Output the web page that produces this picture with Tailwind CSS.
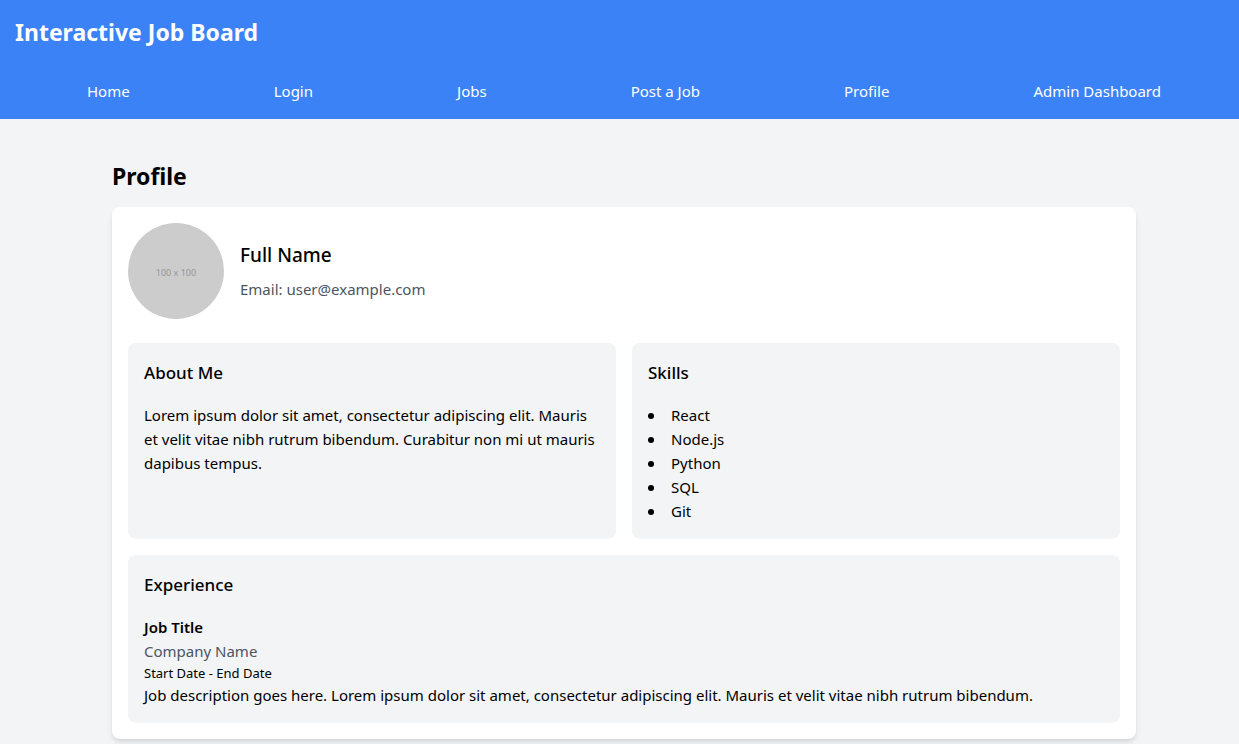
<!DOCTYPE html>
<html lang="en">
<head>
<meta charset="utf-8">
<meta name="viewport" content="width=device-width, initial-scale=1">
<title>Interactive Job Board</title>
<script src="https://cdn.jsdelivr.net/npm/@tailwindcss/browser@4"></script>
</head>
<body class="min-h-screen bg-[#f3f4f6] font-['Noto_Sans','Open_Sans',sans-serif] text-[15px] leading-6 text-black">
<header class="bg-[#3b82f6] py-4 pl-[15px] pr-[6px] text-white">
  <h1 class="text-[23px] leading-8 font-bold">Interactive Job Board</h1>
  <nav class="mt-[31px]">
    <ul class="flex justify-around">
      <li><a href="#">Home</a></li>
      <li><a href="#">Login</a></li>
      <li><a href="#">Jobs</a></li>
      <li><a href="#">Post a Job</a></li>
      <li><a href="#">Profile</a></li>
      <li><a href="#">Admin Dashboard</a></li>
    </ul>
  </nav>
</header>
<div class="pl-[9px]">
<main class="mx-auto mt-[41px] max-w-5xl">
  <h2 class="mb-[15px] text-[23px] leading-8 font-bold">Profile</h2>
  <section class="rounded-lg bg-white p-4 shadow-md">
    <div class="mb-6 flex items-center gap-4">
      <div class="flex size-24 items-center justify-center rounded-full bg-[#cccccc] pt-1 text-[9px] text-[#969696]">100 x 100</div>
      <div>
        <h3 class="mb-2 text-[19px] leading-7 font-medium">Full Name</h3>
        <p class="text-[#4b5563]">Email: user@example.com</p>
      </div>
    </div>
    <div class="grid grid-cols-2 gap-4">
      <section class="rounded-lg bg-[#f3f4f6] p-4">
        <h4 class="mb-4 text-[17px] leading-7 font-medium">About Me</h4>
        <p>Lorem ipsum dolor sit amet, consectetur adipiscing elit. Mauris et velit vitae nibh rutrum bibendum. Curabitur non mi ut mauris dapibus tempus.</p>
      </section>
      <section class="rounded-lg bg-[#f3f4f6] p-4">
        <h4 class="mb-4 text-[17px] leading-7 font-medium">Skills</h4>
        <ul class="list-inside list-disc marker:text-base marker:leading-none">
          <li>React</li>
          <li>Node.js</li>
          <li>Python</li>
          <li>SQL</li>
          <li>Git</li>
        </ul>
      </section>
      <section class="col-span-2 rounded-lg bg-[#f3f4f6] p-4">
        <h4 class="mb-4 text-[17px] leading-7 font-medium">Experience</h4>
        <h5 class="font-semibold">Job Title</h5>
        <p class="text-[#4b5563]">Company Name</p>
        <p class="text-[13px] leading-5">Start Date - End Date</p>
        <p>Job description goes here. Lorem ipsum dolor sit amet, consectetur adipiscing elit. Mauris et velit vitae nibh rutrum bibendum.</p>
      </section>
    </div>
  </section>
</main>
</div>
</body>
</html>
